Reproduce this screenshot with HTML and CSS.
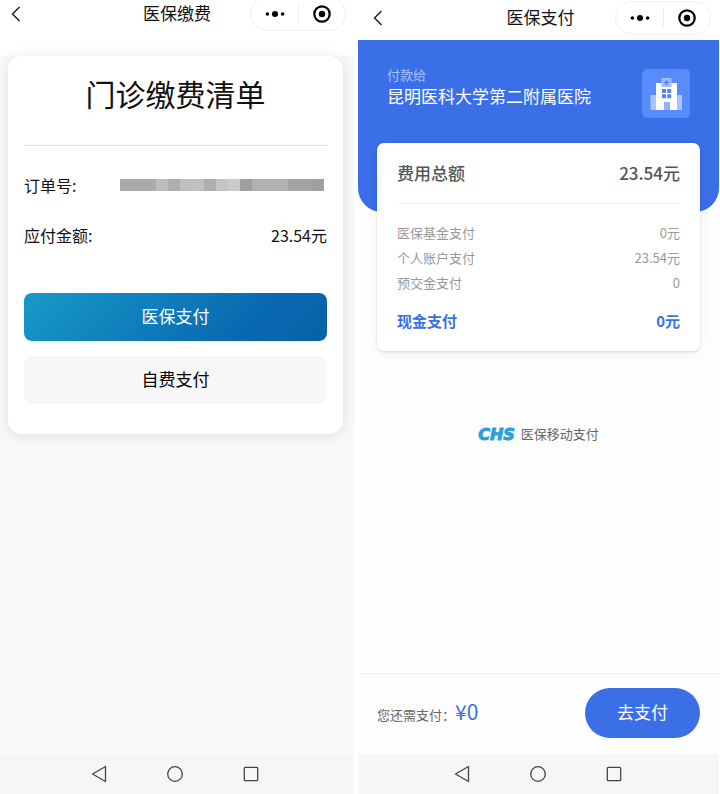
FILE: index.html
```html
<!DOCTYPE html>
<html lang="zh-CN">
<head>
    <meta charset="UTF-8">
    <meta name="viewport" content="width=device-width, initial-scale=1">
    <title>医保支付</title>
    <link rel="stylesheet" href="styles.css">
</head>
<body>
    <div class="screens">
        <!-- Bill -->
        <section class="screen bill">
            <header class="topbar">
                <button class="icon-btn back" type="button" aria-label="返回">
                    <svg width="10" height="16" viewBox="0 0 10 16"><path d="M8.5 1 1.5 8l7 7" fill="none" stroke="#222" stroke-width="1.5"/></svg>
                </button>
                <h2 class="topbar-title">医保缴费</h2>
                <div class="capsule">
                    <button class="icon-btn" type="button" aria-label="更多">
                        <svg width="20" height="8" viewBox="0 0 20 8"><circle cx="2.4" cy="4" r="1.8"/><circle cx="10" cy="4" r="3"/><circle cx="17.6" cy="4" r="1.8"/></svg>
                    </button>
                    <button class="icon-btn" type="button" aria-label="关闭">
                        <svg width="18" height="18" viewBox="0 0 18 18"><circle cx="9" cy="9" r="7.7" fill="none" stroke="#000" stroke-width="2.2"/><circle cx="9" cy="9" r="3.2"/></svg>
                    </button>
                </div>
            </header>
            <main class="bill-main">
                <div class="bill-card">
                    <h1 class="bill-title">门诊缴费清单</h1>
                    <dl class="bill-list">
                        <div class="bill-row">
                            <dt>订单号:</dt>
                            <dd class="masked"></dd>
                        </div>
                        <div class="bill-row">
                            <dt>应付金额:</dt>
                            <dd>23.54元</dd>
                        </div>
                    </dl>
                    <div class="bill-actions">
                        <button class="btn btn-primary" type="button">医保支付</button>
                        <button class="btn btn-plain" type="button">自费支付</button>
                    </div>
                </div>
            </main>
            <nav class="sysnav">
                <button class="icon-btn" type="button" aria-label="后退">
                    <svg width="16" height="18" viewBox="0 0 16 18"><path d="M14.5 1.5v15L1.5 9z" fill="none" stroke="#444" stroke-width="1.3" stroke-linejoin="round"/></svg>
                </button>
                <button class="icon-btn" type="button" aria-label="主页">
                    <svg width="16" height="18" viewBox="0 0 16 18"><circle cx="8" cy="9" r="7.3" fill="none" stroke="#444" stroke-width="1.3"/></svg>
                </button>
                <button class="icon-btn" type="button" aria-label="最近任务">
                    <svg width="16" height="18" viewBox="0 0 16 18"><rect x="1.3" y="2.3" width="13.4" height="13.4" rx="1" fill="none" stroke="#444" stroke-width="1.3"/></svg>
                </button>
            </nav>
        </section>

        <!-- Payment -->
        <section class="screen pay">
            <header class="topbar">
                <button class="icon-btn back" type="button" aria-label="返回">
                    <svg width="10" height="16" viewBox="0 0 10 16"><path d="M8.5 1 1.5 8l7 7" fill="none" stroke="#222" stroke-width="1.5"/></svg>
                </button>
                <h2 class="topbar-title">医保支付</h2>
                <div class="capsule">
                    <button class="icon-btn" type="button" aria-label="更多">
                        <svg width="20" height="8" viewBox="0 0 20 8"><circle cx="2.4" cy="4" r="1.8"/><circle cx="10" cy="4" r="3"/><circle cx="17.6" cy="4" r="1.8"/></svg>
                    </button>
                    <button class="icon-btn" type="button" aria-label="关闭">
                        <svg width="18" height="18" viewBox="0 0 18 18"><circle cx="9" cy="9" r="7.7" fill="none" stroke="#000" stroke-width="2.2"/><circle cx="9" cy="9" r="3.2"/></svg>
                    </button>
                </div>
            </header>
            <main class="pay-main">
                <div class="payee">
                    <div class="payee-text">
                        <p class="payee-label">付款给</p>
                        <p class="payee-name">昆明医科大学第二附属医院</p>
                    </div>
                    <svg class="payee-icon" width="48" height="49" viewBox="0 0 48 49">
                        <rect width="48" height="49" rx="5" fill="#588bfb"/>
                        <path d="M8.500 26H15v15H8.500zM34 26h6v15h-6z" fill="#a9c4ff"/>
                        <path d="M14 14h21v27h-7v-8h-6v8h-8z" fill="#fff"/>
                        <path d="M22 33h6v8h-6z" fill="#8fb1fd"/>
                        <rect x="19.500" y="9" width="10" height="9" fill="#9dbcff"/>
                        <path d="M24.500 11v5M22 13.500h5" stroke="#4d7ff0" stroke-width="1.400"/>
                        <path d="M20 20h4v4h-4zM25.200 20h4v4h-4zM20 25.200h4v4h-4zM25.200 25.200h4v4h-4z" fill="#5484f2"/>
                    </svg>
                </div>
                <div class="fee-card">
                    <div class="fee-total"><span>费用总额</span><span>23.54元</span></div>
                    <div class="fee-list">
                        <div class="fee-row"><span>医保基金支付</span><span>0元</span></div>
                        <div class="fee-row"><span>个人账户支付</span><span>23.54元</span></div>
                        <div class="fee-row"><span>预交金支付</span><span>0</span></div>
                    </div>
                    <div class="fee-cash"><span>现金支付</span><span>0元</span></div>
                </div>
                <p class="brand"><span class="brand-logo">CHS</span>医保移动支付</p>
            </main>
            <footer class="paybar">
                <p class="due">您还需支付：<strong class="due-amount">¥0</strong></p>
                <button class="btn-pay" type="button">去支付</button>
            </footer>
            <nav class="sysnav">
                <button class="icon-btn" type="button" aria-label="后退">
                    <svg width="16" height="18" viewBox="0 0 16 18"><path d="M14.5 1.5v15L1.5 9z" fill="none" stroke="#444" stroke-width="1.3" stroke-linejoin="round"/></svg>
                </button>
                <button class="icon-btn" type="button" aria-label="主页">
                    <svg width="16" height="18" viewBox="0 0 16 18"><circle cx="8" cy="9" r="7.3" fill="none" stroke="#444" stroke-width="1.3"/></svg>
                </button>
                <button class="icon-btn" type="button" aria-label="最近任务">
                    <svg width="16" height="18" viewBox="0 0 16 18"><rect x="1.3" y="2.3" width="13.4" height="13.4" rx="1" fill="none" stroke="#444" stroke-width="1.3"/></svg>
                </button>
            </nav>
        </section>
    </div>
</body>
</html>
```
FILE: styles.css
```css
* {
    box-sizing: border-box;
}
body, h1, h2, p, dl, dd {
    margin: 0;
}
body {
    background: #fff;
    color: #111;
    font-family: "Noto Sans CJK SC", sans-serif;
    font-size: 16px;
}
button {
    border: 0;
    padding: 0;
    font-family: inherit;
    cursor: pointer;
}
svg {
    display: block;
}
.screens {
    display: grid;
    grid-template-columns: 354fr 361fr;
    gap: 4px;
    min-height: 100vh;
    padding-right: 1px;
}
.screen {
    display: flex;
    flex-direction: column;
}

/* top bar */
.topbar {
    display: grid;
    grid-template-columns: 1fr auto 1fr;
    align-items: center;
    padding: 0 8px;
    background: #fff;
}
.topbar-title {
    padding-bottom: 2px;
    font-size: 17px;
    font-weight: 400;
    line-height: 28px;
}
.icon-btn {
    display: flex;
    align-items: center;
    justify-content: center;
    background: none;
}
.back {
    justify-self: start;
    padding: 0 3px;
}
.capsule {
    justify-self: end;
    display: flex;
    width: 96px;
    height: 34px;
    border: 1px solid #f0f0f0;
    border-radius: 17px;
}
.capsule .icon-btn {
    flex: 1;
}
.capsule .icon-btn + .icon-btn::before {
    content: "";
    width: 1px;
    height: 20px;
    margin-right: 14px;
    background: #eee;
}
.capsule .icon-btn + .icon-btn {
    justify-content: flex-start;
}

/* bill */
.bill {
    background: #f8f9fb;
}
.bill .topbar {
    height: 56px;
    padding: 0 8px 28px;
}
.bill .topbar > * {
    margin-top: -4px;
    margin-bottom: -4px;
}
.bill-main {
    flex: 1;
    padding: 0 11px 0 8px;
}
.bill-card {
    padding: 0 16px 30px;
    border-radius: 14px;
    background: #fff;
    box-shadow: 0 2px 16px rgba(0, 0, 0, 0.1);
}
.bill-title {
    padding-bottom: 15px;
    border-bottom: 1px dotted #ccc;
    font-size: 30px;
    font-weight: 400;
    line-height: 74px;
    text-align: center;
}
.bill-list {
    padding: 14px 0 33px;
}
.bill-row {
    display: flex;
    align-items: center;
    justify-content: space-between;
    height: 50px;
}
.masked {
    width: 204px;
    height: 12px;
    margin-right: 3px;
    background: linear-gradient(90deg,
        #ababab 0 36px, #bdbdbd 36px 48px, #afafaf 48px 60px,
        #bfbfbf 60px 72px, #c1c1c1 72px 84px, #aeaeae 84px 96px,
        #c4c4c4 96px 108px, #cbcbcb 108px 120px, #9f9f9f 120px 132px,
        #b1b1b1 132px 168px, #a3a3a3 168px 192px, #a0a0a0 192px);
}
.bill-actions {
    display: grid;
    gap: 15px;
}
.btn {
    height: 48px;
    padding-bottom: 4px;
    border-radius: 8px;
    font-size: 17px;
}
.btn-primary {
    background: linear-gradient(135deg, #1899c9, #0868b0 75%, #0662a5);
    color: #fff;
}
.btn-plain {
    background: #f7f7f7;
    color: #000;
}

/* payment */
.pay {
    background: #fefefe;
}
.pay .topbar {
    height: 40px;
    padding: 0 8px 5px 12px;
}
.pay-main {
    flex: 1;
}
.payee {
    display: flex;
    align-items: flex-start;
    justify-content: space-between;
    height: 172px;
    padding: 26px 29px 0;
    border-radius: 0 0 24px 24px;
    background: #3a6fe8;
    color: #fff;
}
.payee-icon {
    margin-top: 3px;
}
.payee-label {
    color: #a8c2fb;
    font-size: 13px;
    line-height: 18px;
}
.payee-name {
    font-size: 17px;
    line-height: 24px;
}
.fee-card {
    margin: -69px 19px 0;
    padding: 0 20px 16px;
    border-radius: 7px;
    background: #fff;
    box-shadow: 0 1px 3px rgba(0, 0, 0, 0.12), 0 4px 16px rgba(0, 0, 0, 0.05);
}
.fee-total, .fee-row, .fee-cash {
    display: flex;
    align-items: center;
    justify-content: space-between;
}
.fee-total {
    height: 61px;
    padding-bottom: 2px;
    border-bottom: 1px solid #f2f2f2;
    color: #555;
    font-size: 17px;
    font-weight: 500;
}
.fee-list {
    padding: 16px 0 10px;
}
.fee-row {
    height: 25px;
    color: #999;
    font-size: 13px;
}
.fee-cash {
    height: 30px;
    color: #3a6fe8;
    font-size: 15px;
    font-weight: 700;
}
.brand {
    display: flex;
    align-items: center;
    justify-content: center;
    gap: 6px;
    margin-top: 72px;
    color: #666;
    font-size: 13px;
    line-height: 20px;
}
.brand-logo {
    padding-top: 2px;
    color: #2b9fd8;
    font-family: "DejaVu Sans", sans-serif;
    font-size: 16px;
    font-style: italic;
    font-weight: 700;
    -webkit-text-stroke: 1px #2b9fd8;
}
.paybar {
    display: flex;
    align-items: center;
    justify-content: space-between;
    padding: 14px 19px 16px;
    border-top: 1px solid #eee;
}
.due {
    padding-bottom: 4px;
    color: #666;
    font-size: 13px;
}
.due-amount {
    color: #3a6fe8;
    font-size: 21px;
    font-weight: 400;
}
.btn-pay {
    width: 115px;
    height: 50px;
    padding-bottom: 4px;
    border-radius: 25px;
    background: #3a6fe8;
    color: #fff;
    font-size: 17px;
}

/* system navigation */
.sysnav {
    display: flex;
    align-items: center;
    justify-content: center;
    gap: 60px;
    height: 40px;
    padding-right: 2px;
    background: #f6f6f6;
}
.bill .sysnav {
    padding-right: 4px;
}
```
